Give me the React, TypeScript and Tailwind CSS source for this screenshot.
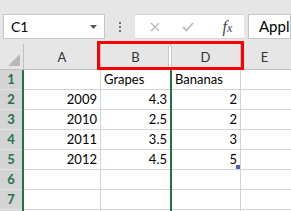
import React from "react";

const rows: { n: number; a?: string; b?: string; d?: string; bLeft?: boolean }[] = [
  { n: 1, b: "Grapes", d: "Bananas", bLeft: true },
  { n: 2, a: "2009", b: "4.3", d: "2" },
  { n: 3, a: "2010", b: "2.5", d: "2" },
  { n: 4, a: "2011", b: "3.5", d: "3" },
  { n: 5, a: "2012", b: "4.5", d: "5" },
  { n: 6 },
  { n: 7 },
];

export default function App() {
  return (
    <div
      className="w-[291px] h-[211px] bg-[#e6e6e6] relative overflow-hidden text-[13px] text-black"
      style={{ fontFamily: "Lato, 'Liberation Sans', sans-serif" }}
    >
      {/* toolbar */}
      <div className="flex h-[44px] pt-[14px] pl-[3px]">
        <div className="w-[102px] h-[25px] border border-[#c6c6c6] bg-white flex items-center justify-between pl-[7px] pr-[7px]">
          <span className="text-[14px]">C1</span>
          <svg width="7" height="4" viewBox="0 0 7 4">
            <path d="M0 0 L7 0 L3.5 4 Z" fill="#555" />
          </svg>
        </div>
        <div className="w-[30px] h-[25px] flex flex-col items-center justify-center gap-[2px]">
          <div className="w-[2px] h-[2px] bg-[#6f6f6f]" />
          <div className="w-[2px] h-[2px] bg-[#6f6f6f]" />
          <div className="w-[2px] h-[2px] bg-[#6f6f6f]" />
        </div>
        <div className="w-[109px] h-[25px] bg-white border-t border-b border-[#d4d4d4] flex items-center">
          <div className="w-[40px] flex justify-center">
            <svg width="10" height="10" viewBox="0 0 10 10">
              <path d="M1 1 L9 9 M9 1 L1 9" stroke="#bcbcbc" strokeWidth="1.4" />
            </svg>
          </div>
          <div className="w-[26px] flex justify-center">
            <svg width="12" height="10" viewBox="0 0 12 10">
              <path d="M1 5 L4.5 8.5 L11 1" stroke="#bcbcbc" strokeWidth="1.8" fill="none" />
            </svg>
          </div>
          <div className="flex-1 flex justify-center pl-[10px]">
            <span
              className="italic text-[#444] text-[16px] leading-none"
              style={{ fontFamily: "'Liberation Serif', serif" }}
            >
              f<span className="text-[12px]">x</span>
            </span>
          </div>
        </div>
        <div className="ml-[4px] flex-1 h-[25px] bg-white border border-[#c6c6c6] flex items-center pl-[10px] overflow-hidden">
          <span className="text-[15px] whitespace-nowrap">Apple</span>
        </div>
      </div>

      {/* column headers */}
      <div className="flex h-[26px] border-b border-[#c0c0c0]">
        <div className="w-[24px] border-r border-[#c0c0c0] relative">
          <svg className="absolute right-[3px] bottom-[3px]" width="12" height="12" viewBox="0 0 12 12">
            <path d="M12 0 L12 12 L0 12 Z" fill="#b8b8b8" />
          </svg>
        </div>
        <div className="w-[77px] border-r border-[#c0c0c0] flex items-center justify-center pt-[2px] text-[#333]">A</div>
        <div className="w-[70px] border-r border-[#c0c0c0] flex items-center justify-center pt-[2px] text-[#333]">B</div>
        <div className="w-[70px] border-r border-[#c0c0c0] flex items-center justify-center pt-[2px] text-[#333]">D</div>
        <div className="flex-1 flex items-center justify-center pt-[2px] text-[#333] pr-[3px]">E</div>
      </div>

      {/* rows */}
      {rows.map((r) => (
        <div key={r.n} className="flex h-[20px]">
          <div className="w-[24px] bg-[#d4d4d4] border-r-2 border-[#217346] flex items-center justify-center font-bold text-[#217346] text-[13px]">
            <div className="w-full h-full border-b border-[#e2e2e2] flex items-center justify-center">{r.n}</div>
          </div>
          <div className="w-[77px] bg-white border-r border-b border-[#d4d4d4] flex items-center justify-end pr-[3px]">
            {r.a}
          </div>
          <div
            className={
              "w-[70px] bg-white border-r border-b border-[#d4d4d4] flex items-center " +
              (r.bLeft ? "justify-start pl-[3px]" : "justify-end pr-[3px]")
            }
          >
            {r.b}
          </div>
          <div
            className={
              "w-[70px] bg-white border-r border-b border-[#d4d4d4] flex items-center " +
              (r.bLeft ? "justify-start pl-[4px]" : "justify-end pr-[3px]")
            }
          >
            {r.d}
          </div>
          <div className="flex-1 bg-white border-b border-[#d4d4d4]" />
        </div>
      ))}
      {/* partial next row */}
      <div className="flex h-[20px]">
        <div className="w-[24px] bg-[#d4d4d4] border-r-2 border-[#217346]" />
        <div className="w-[77px] bg-white border-r border-[#d4d4d4]" />
        <div className="w-[70px] bg-white border-r border-[#d4d4d4]" />
        <div className="w-[70px] bg-white border-r border-[#d4d4d4]" />
        <div className="flex-1 bg-white" />
      </div>

      {/* hidden column C marker in header */}
      <div className="absolute left-[168px] top-[46px] w-[4px] h-[22px] border-l border-r border-[#c8c8c8] bg-white" />

      {/* selection line for column C */}
      <div className="absolute left-[170px] top-[70px] w-[2px] bottom-0 bg-[#217346]" />

      {/* fill handle */}
      <div className="absolute left-[236px] top-[165px] w-[4px] h-[4px] bg-[#4b5cc4]" />

      {/* red highlight box */}
      <div className="absolute left-[97px] top-[41px] w-[147px] h-[29px] border-[3px] border-[#ff0000]" />
    </div>
  );
}
